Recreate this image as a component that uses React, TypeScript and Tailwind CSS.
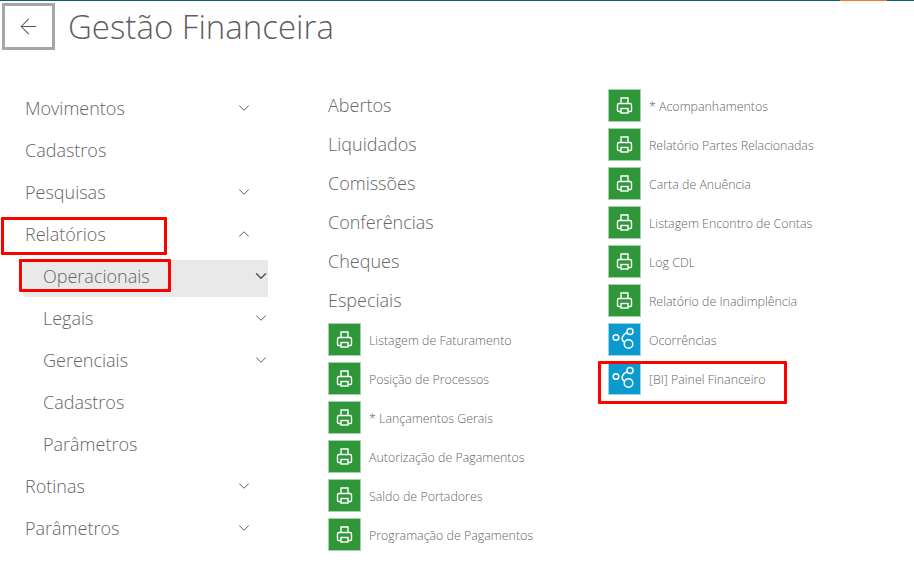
import * as React from "react";
import { ArrowLeft, ChevronDown, ChevronUp } from "lucide-react";

function ShareIcon() {
  return (
    <svg width="31" height="31" viewBox="1 1 31 31" fill="none" stroke="white" strokeWidth="1.5">
      <circle cx="8" cy="14.5" r="2.8" />
      <circle cx="22" cy="8.5" r="3" />
      <circle cx="20.5" cy="21" r="4.3" />
      <path d="M19.3 9.6C14.5 11.5 12 16.5 16.6 19.4" />
    </svg>
  );
}

function PrinterIcon() {
  return (
    <svg width="31" height="31" viewBox="1 1 31 31" fill="none" stroke="white" strokeWidth="1.4">
      <path d="M13 14.5V9h7v5.5" />
      <path d="M13 22.5H10.5a1 1 0 0 1-1-1V16a1.5 1.5 0 0 1 1.5-1.5H22a1.5 1.5 0 0 1 1.5 1.5v5.5a1 1 0 0 1-1 1H20" />
      <rect x="13" y="19.5" width="7" height="4.5" />
    </svg>
  );
}

function MenuRow({
  label,
  sub,
  open,
  arrow,
  active,
}: {
  label: string;
  sub?: boolean;
  open?: boolean;
  arrow?: boolean;
  active?: boolean;
}) {
  return (
    <div
      className={`relative flex h-[42px] items-center justify-between ${sub ? "ml-[23px] w-[245px] pl-5" : "ml-[25px] w-[228px]"}`}
    >
      {active && <div className="absolute inset-x-0 top-[5px] h-[37px] bg-[#e9e9e9]" />}
      <span className="relative text-[18px] text-[#666666]">{label}</span>
      {arrow &&
        (open ? (
          <ChevronUp className="relative text-[#555555]" size={18} strokeWidth={1.3} />
        ) : (
          <ChevronDown
            className={`relative text-[#555555] ${sub ? "-mr-[2px]" : ""}`}
            size={18}
            strokeWidth={active ? 2 : 1.3}
          />
        ))}
    </div>
  );
}

function Tile({ label, kind = "print" }: { label: string; kind?: "print" | "share" }) {
  return (
    <div className="flex h-[39px] items-center gap-2">
      <div
        className={`flex h-[33px] w-[33px] items-center justify-center border ${kind === "print" ? "border-[#a9d0ac] bg-[#2f9639]" : "border-[#9fd3e8] bg-[#0a9ad0]"}`}
      >
        {kind === "print" ? <PrinterIcon /> : <ShareIcon />}
      </div>
      <span className="mt-[4px] text-[12.4px] text-[#666666]">{label}</span>
    </div>
  );
}

export default function App() {
  return (
    <div className="relative h-[568px] w-[914px] overflow-hidden bg-white font-['Open_Sans',sans-serif] font-light">
      <div className="flex h-[1px] justify-end bg-[#0d5c7d] pr-[27px]">
        <div className="h-[1px] w-[47px] bg-[#f47a20]" />
      </div>

      <header className="ml-[2px] mt-[2px] flex items-center gap-[13px]">
        <button className="flex h-[47px] w-[53px] items-center justify-center border-[3px] border-[#a6a6a6]">
          <ArrowLeft className="text-[#555555]" size={25} strokeWidth={1} />
        </button>
        <h1 className="text-[33px] font-light leading-none text-[#5f5f5f]">Gestão Financeira</h1>
      </header>

      <div className="flex">
        <nav className="mt-[37px] w-[328px] shrink-0">
          <MenuRow label="Movimentos" arrow />
          <MenuRow label="Cadastros" />
          <MenuRow label="Pesquisas" arrow />
          <MenuRow label="Relatórios" arrow open />
          <MenuRow label="Operacionais" sub arrow active />
          <MenuRow label="Legais" sub arrow />
          <MenuRow label="Gerenciais" sub arrow />
          <MenuRow label="Cadastros" sub />
          <MenuRow label="Parâmetros" sub />
          <MenuRow label="Rotinas" arrow />
          <MenuRow label="Parâmetros" arrow />
        </nav>

        <section className="mt-[36px] w-[280px] shrink-0">
          {["Abertos", "Liquidados", "Comissões", "Conferências", "Cheques", "Especiais"].map((t) => (
            <div key={t} className="flex h-[39px] items-center text-[18px] text-[#666666]">
              {t}
            </div>
          ))}
          <Tile label="Listagem de Faturamento" />
          <Tile label="Posição de Processos" />
          <Tile label="* Lançamentos Gerais" />
          <Tile label="Autorização de Pagamentos" />
          <Tile label="Saldo de Portadores" />
          <Tile label="Programação de Pagamentos" />
        </section>

        <section className="mt-[36px]">
          <Tile label="* Acompanhamentos" />
          <Tile label="Relatório Partes Relacionadas" />
          <Tile label="Carta de Anuência" />
          <Tile label="Listagem Encontro de Contas" />
          <Tile label="Log CDL" />
          <Tile label="Relatório de Inadimplência" />
          <Tile label="Ocorrências" kind="share" />
          <Tile label="[BI] Painel Financeiro" kind="share" />
        </section>
      </div>

      {/* marcações vermelhas por cima do print */}
      <div className="absolute left-[1px] top-[217px] h-[38px] w-[166px] rounded-[1px] border-[3px] border-[#ff0000]" />
      <div className="absolute left-[19px] top-[259px] h-[33px] w-[152px] rounded-[1px] border-[3px] border-[#ff0000]" />
      <div className="absolute left-[598px] top-[361px] h-[43px] w-[189px] rounded-[1px] border-[3px] border-[#ff0000]" />
    </div>
  );
}
